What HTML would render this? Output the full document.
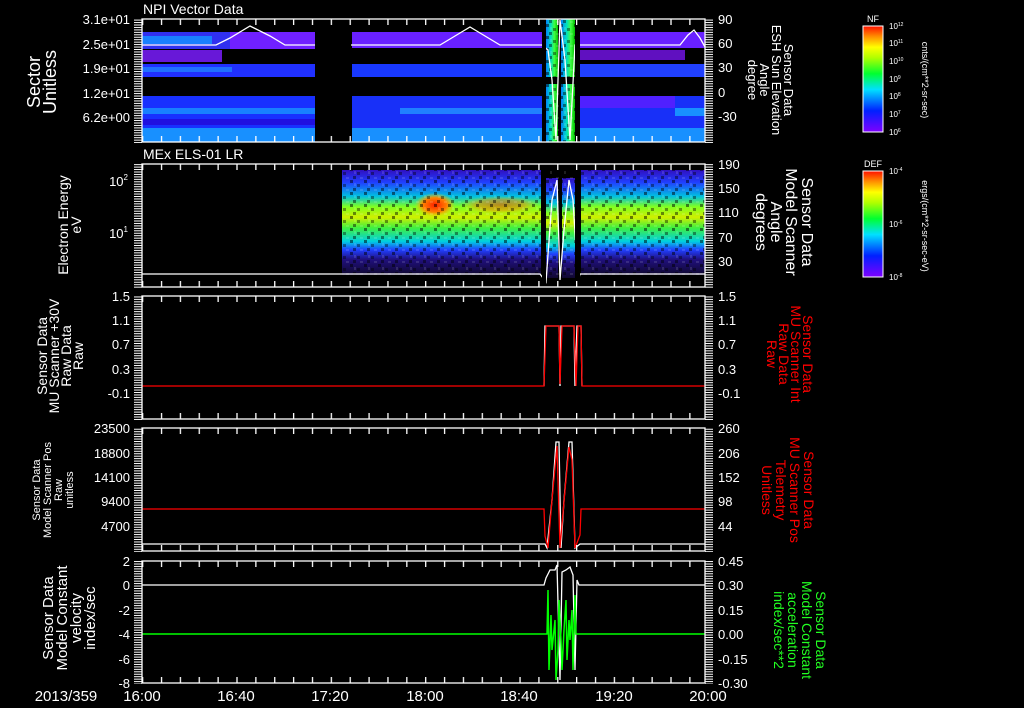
<!DOCTYPE html>
<html><head><meta charset="utf-8"><style>
html,body{margin:0;padding:0;background:#000;width:1024px;height:708px;overflow:hidden}
svg{display:block}
text{font-family:"Liberation Sans",sans-serif;fill:#fff}
</style></head><body>
<svg width="1024" height="708" viewBox="0 0 1024 708" xmlns="http://www.w3.org/2000/svg">
<defs>
<pattern id="xt" x="142" y="0" width="18.87" height="708" patternUnits="userSpaceOnUse"><rect x="0" y="0" width="1.3" height="708" fill="#fff"/></pattern>
<pattern id="yt" x="0" y="0" width="20" height="2.45" patternUnits="userSpaceOnUse"><rect x="0" y="0" width="20" height="1" fill="#fff"/></pattern>
<pattern id="noise" x="0" y="0" width="14" height="12" patternUnits="userSpaceOnUse">
<rect x="0" y="0" width="3" height="3" fill="#000" opacity="0.5"/><rect x="7" y="4" width="3" height="3" fill="#000" opacity="0.4"/><rect x="3" y="8" width="3" height="3" fill="#000" opacity="0.45"/><rect x="10" y="9" width="3" height="2" fill="#fff" opacity="0.12"/><rect x="4" y="3" width="2" height="3" fill="#fff" opacity="0.12"/></pattern>
<linearGradient id="cb" x1="0" y1="1" x2="0" y2="0">
<stop offset="0" stop-color="#7f00ff"/><stop offset="0.2" stop-color="#0020ff"/><stop offset="0.4" stop-color="#00e0ff"/><stop offset="0.55" stop-color="#00ff30"/><stop offset="0.7" stop-color="#b0ff00"/><stop offset="0.8" stop-color="#ffff00"/><stop offset="0.9" stop-color="#ff9000"/><stop offset="1" stop-color="#ff1000"/></linearGradient>
<linearGradient id="p2" x1="0" y1="0" x2="0" y2="1">
<stop offset="0" stop-color="#3010c0"/><stop offset="0.12" stop-color="#2040ff"/><stop offset="0.25" stop-color="#00c0e0"/><stop offset="0.35" stop-color="#80ff20"/><stop offset="0.45" stop-color="#d0f000"/><stop offset="0.55" stop-color="#40f040"/><stop offset="0.68" stop-color="#00d0e0"/><stop offset="0.76" stop-color="#2040ff"/><stop offset="0.85" stop-color="#201080"/><stop offset="1" stop-color="#100830"/></linearGradient>
<linearGradient id="gs" x1="0" y1="0" x2="1" y2="0">
<stop offset="0" stop-color="#0080ff"/><stop offset="0.4" stop-color="#00e0c0"/><stop offset="0.7" stop-color="#40ff40"/><stop offset="1" stop-color="#00c000"/></linearGradient>
<radialGradient id="red" cx="0.5" cy="0.5" r="0.5"><stop offset="0" stop-color="#ff2000"/><stop offset="0.6" stop-color="#ff8000"/><stop offset="1" stop-color="#ffd000" stop-opacity="0"/></radialGradient>
</defs>

<!-- Panel 1 data -->
<g>
<rect x="142" y="32" width="173" height="17" fill="#3030f0"/>
<rect x="142" y="36" width="70" height="8" fill="#1880ff"/>
<rect x="230" y="32" width="85" height="17" fill="#7020ff"/>
<rect x="142" y="50" width="80" height="12" fill="#6818d8"/>
<rect x="142" y="64" width="173" height="13" fill="#2030ff"/>
<rect x="142" y="67" width="90" height="5" fill="#2070ff"/>
<rect x="142" y="96" width="173" height="46" fill="#1830ff"/>
<rect x="142" y="108" width="173" height="6" fill="#1880ff"/>
<rect x="142" y="128" width="173" height="14" fill="#1890ff"/>
<rect x="142" y="119" width="173" height="6" fill="#2010e0"/>
<rect x="352" y="32" width="190" height="16" fill="#6820ff"/>
<rect x="352" y="64" width="190" height="13" fill="#1838ff"/>
<rect x="352" y="96" width="190" height="46" fill="#1830f8"/>
<rect x="400" y="108" width="142" height="6" fill="#2080ff"/>
<rect x="352" y="128" width="190" height="14" fill="#1890ff"/>
<rect x="546" y="19" width="12" height="123" fill="url(#gs)"/>
<rect x="561" y="19" width="14" height="123" fill="url(#gs)"/>
<rect x="546" y="19" width="29" height="123" fill="url(#noise)"/>
<rect x="546" y="77" width="30" height="7" fill="#000"/>
<rect x="580" y="32" width="125" height="16" fill="#6820ff"/>
<rect x="580" y="50" width="105" height="10" fill="#6010c0"/>
<rect x="580" y="64" width="125" height="13" fill="#2040ff"/>
<rect x="580" y="96" width="125" height="46" fill="#1830f8"/>
<rect x="580" y="96" width="95" height="12" fill="#5020ff"/>
<rect x="675" y="108" width="30" height="8" fill="#1890ff"/>
<rect x="580" y="128" width="125" height="14" fill="#1890ff"/>
<polyline fill="none" stroke="#fff" stroke-width="1.3" points="142,45 216,45 230,38 250,26 270,36 285,45 440,45 455,36 470,27 485,36 500,45 542,45 548,50 552,80 556,140 560,20 565,60 570,140 575,45 680,45 688,35 694,30 700,38 705,47"/>
</g>

<!-- Panel 2 data -->
<rect x="342" y="170" width="199" height="105" fill="url(#p2)"/>
<rect x="581" y="170" width="124" height="105" fill="url(#p2)"/>
<rect x="546" y="178" width="12" height="100" fill="url(#p2)"/>
<rect x="562" y="178" width="13" height="100" fill="url(#p2)"/>
<ellipse cx="435" cy="205" rx="20" ry="12" fill="url(#red)"/>
<ellipse cx="500" cy="205" rx="40" ry="9" fill="url(#red)" opacity="0.5"/>
<rect x="342" y="170" width="363" height="105" fill="url(#noise)"/>
<polyline fill="none" stroke="#fff" stroke-width="1.3" points="142,274 540,274 546,282 552,200 557,180 560,280 564,230 569,180 573,200 578,282 580,274 705,274"/>

<!-- Panel 3 -->
<polyline fill="none" stroke="#fff" stroke-width="1.3" points="544,386 545,326 559,326 560,386 561,326 574,326 575,386 577,326 581,326 582,386"/>
<polyline fill="none" stroke="#f00" stroke-width="1.3" points="142,386 544,386 546,326 559,326 560,384 562,326 574,326 576,386 578,326 581,326 582,386 705,386"/>

<!-- Panel 4 -->
<polyline fill="none" stroke="#fff" stroke-width="1.3" points="142,544 545,544 547,548 552,500 556,442 559,442 561,548 564,500 569,442 572,442 575,548 580,544 705,544"/>
<polyline fill="none" stroke="#f00" stroke-width="1.3" points="142,509 544,509 545,536 548,548 552,500 557,446 560,548 565,490 569,447 572,460 575,548 580,535 581,509 705,509"/>

<!-- Panel 5 -->
<polyline fill="none" stroke="#fff" stroke-width="1.3" points="142,585 544,585 546,578 550,570 555,570 557,565 560,680 562,572 566,570 570,567 573,575 575,670 577,580 579,585 705,585"/>
<polyline fill="none" stroke="#0f0" stroke-width="1.5" points="142,634 547,634 548,590 549,670 551,615 552,650 553,640 555,620 556,680 558,650 559,600 561,640 562,670 564,630 566,600 567,660 569,620 570,640 572,610 573,670 575,595 576,634 705,634"/>

<!-- black gaps over p1/p2 -->
<rect x="315" y="20" width="36" height="122" fill="#000"/>
<rect x="542" y="20" width="4" height="266" fill="#000"/>
<rect x="575" y="20" width="5" height="266" fill="#000"/>

<!-- Axes frames -->
<g fill="none" stroke="#fff" stroke-width="1.3">
<rect x="142" y="19" width="563" height="123"/>
<rect x="142" y="164" width="563" height="123"/>
<rect x="142" y="296" width="563" height="123"/>
<rect x="142" y="428" width="563" height="123"/>
<rect x="142" y="561" width="563" height="122"/>
</g>
<g fill="url(#xt)">
<rect x="142" y="19" width="564" height="6"/><rect x="142" y="136" width="564" height="6"/>
<rect x="142" y="164" width="564" height="6"/><rect x="142" y="281" width="564" height="6"/>
<rect x="142" y="296" width="564" height="6"/><rect x="142" y="413" width="564" height="6"/>
<rect x="142" y="428" width="564" height="6"/><rect x="142" y="545" width="564" height="6"/>
<rect x="142" y="561" width="564" height="6"/><rect x="142" y="677" width="564" height="6"/>
</g>
<g fill="url(#yt)">
<rect x="134" y="19" width="8" height="124"/><rect x="705" y="19" width="8" height="124"/>
<rect x="134" y="164" width="8" height="124"/><rect x="705" y="164" width="8" height="124"/>
<rect x="134" y="296" width="8" height="124"/><rect x="705" y="296" width="8" height="124"/>
<rect x="134" y="428" width="8" height="124"/><rect x="705" y="428" width="8" height="124"/>
<rect x="134" y="561" width="8" height="123"/><rect x="705" y="561" width="8" height="123"/>
</g>

<text x="143" y="14" font-size="14">NPI Vector Data</text>
<text x="143" y="159" font-size="14">MEx ELS-01 LR</text>

<g font-size="13" text-anchor="end">
<text x="130" y="24">3.1e+01</text><text x="130" y="49">2.5e+01</text><text x="130" y="73">1.9e+01</text><text x="130" y="98">1.2e+01</text><text x="130" y="122">6.2e+00</text>
<text x="128" y="186">10<tspan font-size="8" dy="-6">2</tspan></text><text x="128" y="238">10<tspan font-size="8" dy="-6">1</tspan></text>
<text x="130" y="301">1.5</text><text x="130" y="325">1.1</text><text x="130" y="349">0.7</text><text x="130" y="374">0.3</text><text x="130" y="398">-0.1</text>
<text x="130" y="433">23500</text><text x="130" y="458">18800</text><text x="130" y="482">14100</text><text x="130" y="506">9400</text><text x="130" y="531">4700</text>
<text x="130" y="566">2</text><text x="130" y="590">0</text><text x="130" y="615">-2</text><text x="130" y="639">-4</text><text x="130" y="664">-6</text><text x="130" y="688">-8</text>
</g>
<g font-size="13">
<text x="718" y="24">90</text><text x="718" y="48">60</text><text x="718" y="72">30</text><text x="718" y="97">0</text><text x="718" y="121">-30</text>
<text x="718" y="169">190</text><text x="718" y="193">150</text><text x="718" y="217">110</text><text x="718" y="242">70</text><text x="718" y="266">30</text>
<text x="718" y="301">1.5</text><text x="718" y="325">1.1</text><text x="718" y="349">0.7</text><text x="718" y="374">0.3</text><text x="718" y="398">-0.1</text>
<text x="718" y="433">260</text><text x="718" y="458">206</text><text x="718" y="482">152</text><text x="718" y="506">98</text><text x="718" y="531">44</text>
<text x="718" y="566">0.45</text><text x="718" y="590">0.30</text><text x="718" y="615">0.15</text><text x="718" y="639">0.00</text><text x="718" y="664">-0.15</text><text x="718" y="688">-0.30</text>
</g>
<g font-size="15" text-anchor="middle">
<text x="66" y="701">2013/359</text>
<text x="142" y="701">16:00</text><text x="236" y="701">16:40</text><text x="330" y="701">17:20</text><text x="425" y="701">18:00</text><text x="519" y="701">18:40</text><text x="614" y="701">19:20</text><text x="708" y="701">20:00</text>
</g>

<g text-anchor="middle">
<text transform="translate(40,82) rotate(-90)" font-size="18">Sector</text>
<text transform="translate(56,82) rotate(-90)" font-size="18">Unitless</text>
<text transform="translate(68,225) rotate(-90)" font-size="14">Electron Energy</text>
<text transform="translate(81,225) rotate(-90)" font-size="14">eV</text>
<text transform="translate(47,356) rotate(-90)" font-size="14">Sensor Data</text>
<text transform="translate(59,356) rotate(-90)" font-size="14">MU Scanner +30V</text>
<text transform="translate(71,356) rotate(-90)" font-size="14">Raw Data</text>
<text transform="translate(83,356) rotate(-90)" font-size="14">Raw</text>
<text transform="translate(40,490) rotate(-90)" font-size="11">Sensor Data</text>
<text transform="translate(51,490) rotate(-90)" font-size="11">Model Scanner Pos</text>
<text transform="translate(62,490) rotate(-90)" font-size="11">Raw</text>
<text transform="translate(73,490) rotate(-90)" font-size="11">unitless</text>
<text transform="translate(53,618) rotate(-90)" font-size="15">Sensor Data</text>
<text transform="translate(67,618) rotate(-90)" font-size="15">Model Constant</text>
<text transform="translate(81,618) rotate(-90)" font-size="15">velocity</text>
<text transform="translate(95,618) rotate(-90)" font-size="15">index/sec</text>
</g>
<g text-anchor="middle">
<text transform="translate(784,80) rotate(90)" font-size="13">Sensor Data</text>
<text transform="translate(772,80) rotate(90)" font-size="13">ESH Sun Elevation</text>
<text transform="translate(760,80) rotate(90)" font-size="13">Angle</text>
<text transform="translate(748,80) rotate(90)" font-size="13">degree</text>
<text transform="translate(802,222) rotate(90)" font-size="16">Sensor Data</text>
<text transform="translate(786,222) rotate(90)" font-size="16">Model Scanner</text>
<text transform="translate(771,222) rotate(90)" font-size="16">Angle</text>
<text transform="translate(756,222) rotate(90)" font-size="16">degrees</text>
<text style="fill:#f00" transform="translate(803,354) rotate(90)" font-size="14">Sensor Data</text>
<text style="fill:#f00" transform="translate(791,354) rotate(90)" font-size="14">MU Scanner Int</text>
<text style="fill:#f00" transform="translate(779,354) rotate(90)" font-size="14">Raw Data</text>
<text style="fill:#f00" transform="translate(767,354) rotate(90)" font-size="14">Raw</text>
<text style="fill:#f00" transform="translate(804,490) rotate(90)" font-size="14">Sensor Data</text>
<text style="fill:#f00" transform="translate(790,490) rotate(90)" font-size="14">MU Scanner Pos</text>
<text style="fill:#f00" transform="translate(776,490) rotate(90)" font-size="14">Telemetry</text>
<text style="fill:#f00" transform="translate(762,490) rotate(90)" font-size="14">Unitless</text>
<text style="fill:#2f2" transform="translate(816,630) rotate(90)" font-size="14">Sensor Data</text>
<text style="fill:#2f2" transform="translate(802,630) rotate(90)" font-size="14">Model Constant</text>
<text style="fill:#2f2" transform="translate(788,630) rotate(90)" font-size="14">acceleration</text>
<text style="fill:#2f2" transform="translate(774,630) rotate(90)" font-size="14">index/sec**2</text>
</g>

<rect x="863" y="26" width="20" height="106" fill="url(#cb)" stroke="#fff" stroke-width="1"/>
<rect x="863" y="171" width="20" height="106" fill="url(#cb)" stroke="#fff" stroke-width="1"/>
<text x="873" y="22" font-size="9" text-anchor="middle">NF</text>
<text x="873" y="167" font-size="9" text-anchor="middle">DEF</text>
<g font-size="8">
<text x="889" y="29">10<tspan font-size="5" dy="-3">12</tspan></text>
<text x="889" y="46">10<tspan font-size="5" dy="-3">11</tspan></text>
<text x="889" y="64">10<tspan font-size="5" dy="-3">10</tspan></text>
<text x="889" y="82">10<tspan font-size="5" dy="-3">9</tspan></text>
<text x="889" y="99">10<tspan font-size="5" dy="-3">8</tspan></text>
<text x="889" y="117">10<tspan font-size="5" dy="-3">7</tspan></text>
<text x="889" y="135">10<tspan font-size="5" dy="-3">6</tspan></text>
<text x="889" y="174">10<tspan font-size="5" dy="-3">-4</tspan></text>
<text x="889" y="227">10<tspan font-size="5" dy="-3">-6</tspan></text>
<text x="889" y="280">10<tspan font-size="5" dy="-3">-8</tspan></text>
</g>
<text transform="translate(922,80) rotate(90)" font-size="9" text-anchor="middle">cnts/(cm**2-sr-sec)</text>
<text transform="translate(922,226) rotate(90)" font-size="9" text-anchor="middle">ergs/(cm**2-sr-sec-eV)</text>
</svg>
</body></html>
